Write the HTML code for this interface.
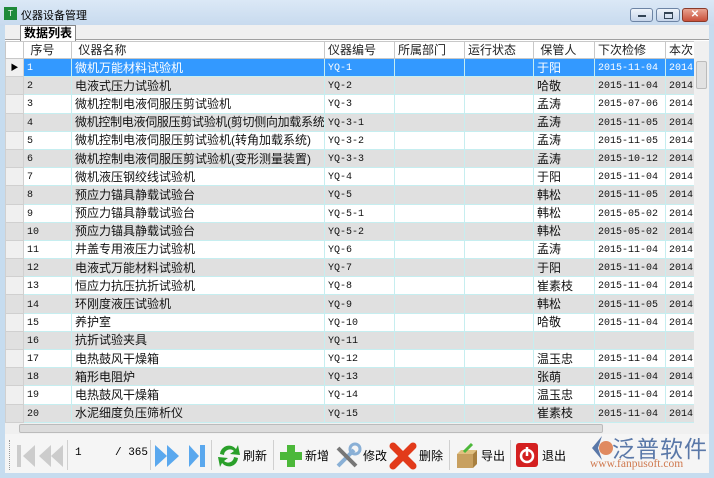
<!DOCTYPE html>
<html><head><meta charset="utf-8"><style>
*{margin:0;padding:0;box-sizing:border-box}
body{width:714px;height:478px;overflow:hidden;background:#c6dcef;font-family:"Liberation Sans","Noto Sans CJK SC",sans-serif;font-size:12px;position:relative}
.abs{position:absolute}
#title{left:0;top:0;width:714px;height:26px;background:linear-gradient(#dbe8f6,#c7daee)}
.wb{top:8px;height:14px;border:1px solid #6d84a4;border-radius:3px;background:linear-gradient(#eef3fa,#c6d5ea)}
#client{left:5px;top:25px;width:704px;height:448px;background:#fff}
#tabbar{left:5px;top:25px;width:704px;height:15px;background:#f0f0f0;border-bottom:1px solid #a0a0a0}
#tab{left:20px;top:25px;width:56px;height:16px;background:#fff;border:1px solid #888;border-bottom:none;font-weight:bold;font-size:12px;line-height:15px;padding-left:3px}
table{border-collapse:collapse;table-layout:fixed;position:absolute;left:5px;top:41px;width:689px}
tr{height:18.2px}
td{border:1px solid #c6eef0;white-space:nowrap;overflow:hidden;padding-left:3px;font-size:12px;line-height:14px;color:#111;vertical-align:middle}
tr.h{height:17px}
tr.h td{background:#fff;border-color:#c8c8c8;color:#222}
td.rh{background:#f0f0f0;border-color:#d0d0d0;padding:0}
tr.g td{background:#e0e0e0}
tr.s td{background:#3399ff;color:#fff}
tr.s td.rh{background:#f0f0f0;color:#000}
td.m{font-family:"Liberation Mono",monospace;font-size:10px;padding-top:3px}
td.n{letter-spacing:-0.3px}
#vs{left:694px;top:41px;width:15px;height:382px;background:#f0f0f0}
#hs{left:5px;top:423px;width:704px;height:11px;background:#f0f0f0}
#tb{left:5px;top:434px;width:704px;height:39px;background:#f5f5f5}
.sep{top:440px;width:1px;height:30px;background:#d0d0d0}
.lbl{top:447px;font-size:12px}
</style></head><body>
<div id="title" class="abs"></div>
<div class="abs" style="left:4px;top:7px;width:13px;height:13px;background:#1e8a3a;color:#fff;font-size:8px;line-height:13px;text-align:center">T</div>
<div class="abs" style="left:21px;top:7px;font-size:11px">仪器设备管理</div>
<div class="abs wb" style="left:630px;width:23px"><div class="abs" style="left:7px;top:6px;width:8px;height:2px;background:#345"></div></div>
<div class="abs wb" style="left:656px;width:24px"><div class="abs" style="left:7px;top:3px;width:9px;height:7px;border:1px solid #345;border-top-width:2px"></div></div>
<div class="abs wb" style="left:682px;width:26px;background:linear-gradient(#e8a290,#c9503a);border-color:#8a3a2a;color:#fff;font-size:10px;font-weight:bold;text-align:center;line-height:12px">✕</div>
<div id="client" class="abs"></div>
<div id="tabbar" class="abs"></div>
<div id="tab" class="abs">数据列表</div>
<table>
<colgroup><col style="width:18px"><col style="width:48px"><col style="width:253px"><col style="width:70px"><col style="width:70px"><col style="width:69px"><col style="width:61px"><col style="width:71px"><col style="width:29px"></colgroup>
<tr class="h"><td class="rh"></td><td>&nbsp;序号</td><td>&nbsp;仪器名称</td><td>仪器编号</td><td>所属部门</td><td>运行状态</td><td>&nbsp;保管人</td><td>下次检修</td><td>本次</td></tr>
<tr class="s"><td class="rh" style="font-size:8px;text-align:center">▶</td><td class="m">1</td><td>微机万能材料试验机</td><td class="m">YQ-1</td><td></td><td></td><td>于阳</td><td class="m">2015-11-04</td><td class="m">2014-</td></tr>
<tr class="g"><td class="rh"></td><td class="m">2</td><td>电液式压力试验机</td><td class="m">YQ-2</td><td></td><td></td><td>哈敬</td><td class="m">2015-11-04</td><td class="m">2014-</td></tr>
<tr><td class="rh"></td><td class="m">3</td><td>微机控制电液伺服压剪试验机</td><td class="m">YQ-3</td><td></td><td></td><td>孟涛</td><td class="m">2015-07-06</td><td class="m">2014-</td></tr>
<tr class="g"><td class="rh"></td><td class="m">4</td><td class="n">微机控制电液伺服压剪试验机(剪切侧向加载系统)</td><td class="m">YQ-3-1</td><td></td><td></td><td>孟涛</td><td class="m">2015-11-05</td><td class="m">2014-</td></tr>
<tr><td class="rh"></td><td class="m">5</td><td>微机控制电液伺服压剪试验机(转角加载系统)</td><td class="m">YQ-3-2</td><td></td><td></td><td>孟涛</td><td class="m">2015-11-05</td><td class="m">2014-</td></tr>
<tr class="g"><td class="rh"></td><td class="m">6</td><td>微机控制电液伺服压剪试验机(变形测量装置)</td><td class="m">YQ-3-3</td><td></td><td></td><td>孟涛</td><td class="m">2015-10-12</td><td class="m">2014-</td></tr>
<tr><td class="rh"></td><td class="m">7</td><td>微机液压钢绞线试验机</td><td class="m">YQ-4</td><td></td><td></td><td>于阳</td><td class="m">2015-11-04</td><td class="m">2014-</td></tr>
<tr class="g"><td class="rh"></td><td class="m">8</td><td>预应力锚具静载试验台</td><td class="m">YQ-5</td><td></td><td></td><td>韩松</td><td class="m">2015-11-05</td><td class="m">2014-</td></tr>
<tr><td class="rh"></td><td class="m">9</td><td>预应力锚具静载试验台</td><td class="m">YQ-5-1</td><td></td><td></td><td>韩松</td><td class="m">2015-05-02</td><td class="m">2014-</td></tr>
<tr class="g"><td class="rh"></td><td class="m">10</td><td>预应力锚具静载试验台</td><td class="m">YQ-5-2</td><td></td><td></td><td>韩松</td><td class="m">2015-05-02</td><td class="m">2014-</td></tr>
<tr><td class="rh"></td><td class="m">11</td><td>井盖专用液压力试验机</td><td class="m">YQ-6</td><td></td><td></td><td>孟涛</td><td class="m">2015-11-04</td><td class="m">2014-</td></tr>
<tr class="g"><td class="rh"></td><td class="m">12</td><td>电液式万能材料试验机</td><td class="m">YQ-7</td><td></td><td></td><td>于阳</td><td class="m">2015-11-04</td><td class="m">2014-</td></tr>
<tr><td class="rh"></td><td class="m">13</td><td>恒应力抗压抗折试验机</td><td class="m">YQ-8</td><td></td><td></td><td>崔素枝</td><td class="m">2015-11-04</td><td class="m">2014-</td></tr>
<tr class="g"><td class="rh"></td><td class="m">14</td><td>环刚度液压试验机</td><td class="m">YQ-9</td><td></td><td></td><td>韩松</td><td class="m">2015-11-05</td><td class="m">2014-</td></tr>
<tr><td class="rh"></td><td class="m">15</td><td>养护室</td><td class="m">YQ-10</td><td></td><td></td><td>哈敬</td><td class="m">2015-11-04</td><td class="m">2014-</td></tr>
<tr class="g"><td class="rh"></td><td class="m">16</td><td>抗折试验夹具</td><td class="m">YQ-11</td><td></td><td></td><td></td><td></td><td></td></tr>
<tr><td class="rh"></td><td class="m">17</td><td>电热鼓风干燥箱</td><td class="m">YQ-12</td><td></td><td></td><td>温玉忠</td><td class="m">2015-11-04</td><td class="m">2014-</td></tr>
<tr class="g"><td class="rh"></td><td class="m">18</td><td>箱形电阻炉</td><td class="m">YQ-13</td><td></td><td></td><td>张萌</td><td class="m">2015-11-04</td><td class="m">2014-</td></tr>
<tr><td class="rh"></td><td class="m">19</td><td>电热鼓风干燥箱</td><td class="m">YQ-14</td><td></td><td></td><td>温玉忠</td><td class="m">2015-11-04</td><td class="m">2014-</td></tr>
<tr class="g"><td class="rh"></td><td class="m">20</td><td>水泥细度负压筛析仪</td><td class="m">YQ-15</td><td></td><td></td><td>崔素枝</td><td class="m">2015-11-04</td><td class="m">2014-</td></tr>
</table>
<div id="vs" class="abs"><div class="abs" style="left:2px;top:20px;width:11px;height:28px;background:#e2e2e2;border:1px solid #bbb;border-radius:2px"></div></div>
<div id="hs" class="abs"><div class="abs" style="left:14px;top:1px;width:584px;height:9px;background:#dcdcdc;border:1px solid #bbb;border-radius:2px"></div></div>
<div id="tb" class="abs"></div>
<div class="abs" style="left:9px;top:440px;width:1px;height:30px;border-left:1px dotted #999"></div>
<svg class="abs" style="left:15px;top:443px" width="50" height="26"><rect x="2" y="2" width="4" height="22" fill="#ccc"/><path d="M20 2L8 13L20 24Z" fill="#ccc"/><path d="M36 2L24 13L36 24Z M48 2L36 13L48 24Z" fill="#ccc"/></svg>
<div class="abs sep" style="left:67px"></div>
<div class="abs lbl" style="left:75px;font-family:'Liberation Mono';font-size:11px">1</div>
<div class="abs lbl" style="left:115px;font-family:'Liberation Mono';font-size:11px">/ 365</div>
<div class="abs sep" style="left:150px"></div>
<svg class="abs" style="left:153px;top:443px" width="54" height="26"><path d="M2 2L14 13L2 24Z M14 2L26 13L14 24Z" fill="#5aa8ee"/><path d="M36 2L46 13L36 24Z" fill="#5aa8ee"/><rect x="47" y="2" width="5" height="22" fill="#5aa8ee"/></svg>
<div class="abs sep" style="left:211px"></div>
<svg class="abs" style="left:216px;top:442px" width="26" height="28"><path d="M4 12A9 9 0 0 1 20 7L22 3L24 13L14 12L18 9A6 6 0 0 0 8 13Z" fill="#2aa02a"/><path d="M22 16A9 9 0 0 1 6 21L4 25L2 15L12 16L8 19A6 6 0 0 0 18 15Z" fill="#2aa02a"/></svg>
<div class="abs lbl" style="left:243px">刷新</div>
<div class="abs sep" style="left:273px"></div>
<svg class="abs" style="left:278px;top:443px" width="26" height="26"><path d="M9 2h8v7h7v8h-7v7h-8v-7h-7v-8h7z" fill="#4cb83a"/></svg>
<div class="abs lbl" style="left:305px">新增</div>
<svg class="abs" style="left:334px;top:442px" width="28" height="28"><path d="M4 24L20 8" stroke="#8ab0d6" stroke-width="4"/><path d="M4 6L22 24" stroke="#777" stroke-width="4"/><circle cx="21" cy="7" r="5" fill="none" stroke="#8ab0d6" stroke-width="3"/></svg>
<div class="abs lbl" style="left:363px">修改</div>
<svg class="abs" style="left:389px;top:442px" width="28" height="28"><path d="M4 4L24 24M24 4L4 24" stroke="#e23a1a" stroke-width="7" stroke-linecap="round"/></svg>
<div class="abs lbl" style="left:419px">删除</div>
<div class="abs sep" style="left:449px"></div>
<svg class="abs" style="left:454px;top:442px" width="24" height="28"><path d="M3 12h16v14H3z" fill="#c8a060"/><path d="M3 12l4-4h16l-4 4z" fill="#e0c080"/><path d="M19 12l4-4v14l-4 4z" fill="#a88040"/><path d="M10 10L18 2" stroke="#4cb83a" stroke-width="3"/></svg>
<div class="abs lbl" style="left:481px">导出</div>
<div class="abs sep" style="left:510px"></div>
<svg class="abs" style="left:515px;top:442px" width="24" height="26"><rect x="1" y="1" width="22" height="24" rx="3" fill="#d42020"/><circle cx="12" cy="14" r="6" fill="none" stroke="#fff" stroke-width="2.5"/><path d="M12 5v9" stroke="#fff" stroke-width="2.5"/></svg>
<div class="abs lbl" style="left:542px">退出</div>
<svg class="abs" style="left:588px;top:434px" width="28" height="28"><path d="M14 2L4 14L14 26L10 14Z" fill="#5a78a8"/><circle cx="18" cy="14" r="7" fill="#e08a60"/></svg>
<div class="abs" style="left:612px;top:430px;font-size:23px;color:#5a78a8;letter-spacing:1px">泛普软件</div>
<div class="abs" style="left:590px;top:458px;font-family:'Liberation Serif',serif;font-size:11.5px;color:#d07a50">www.fanpusoft.com</div>
</body></html>
